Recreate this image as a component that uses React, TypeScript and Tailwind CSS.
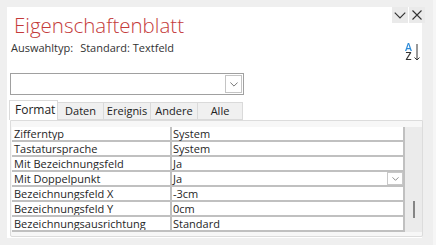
import React from 'react';

const rows = [
  { label: 'Zifferntyp', value: 'System' },
  { label: 'Tastatursprache', value: 'System' },
  { label: 'Mit Bezeichnungsfeld', value: 'Ja' },
  { label: 'Mit Doppelpunkt', value: 'Ja', combo: true },
  { label: 'Bezeichnungsfeld X', value: '-3cm' },
  { label: 'Bezeichnungsfeld Y', value: '0cm' },
  { label: 'Bezeichnungsausrichtung', value: 'Standard' },
];

const tabs = [
  { name: 'Format', w: 'w-[49px]' },
  { name: 'Daten', w: 'w-[46px]' },
  { name: 'Ereignis', w: 'w-[47px]' },
  { name: 'Andere', w: 'w-[47px]' },
  { name: 'Alle', w: 'w-[45px]' },
];

const Chevron = ({ className = '' }: { className?: string }) => (
  <svg viewBox="0 0 10 6" className={className} fill="none" stroke="currentColor" strokeWidth="1">
    <path d="M0.5 0.5 L5 5 L9.5 0.5" />
  </svg>
);

export default function App() {
  return (
    <div
      className="w-[436px] h-[245px] bg-[#efefef] pt-[7px] pl-[7px] pr-[11px] pb-[7px] text-[#262626] border-r-[3px] border-[#f6f6f6]"
      style={{ fontFamily: '"Open Sans", "Noto Sans", sans-serif' }}
    >
      <div className="relative w-full h-full bg-white flex flex-col">
        {/* window buttons */}
        <div className="absolute top-0 right-[-3px] flex h-[16px] bg-[#eaeaea]">
          <div className="w-[16px] flex items-center justify-center text-[#333]">
            <Chevron className="w-[12px] h-[7px]" />
          </div>
          <div className="w-[1px] bg-white" />
          <div className="w-[16px] flex items-center justify-center text-[#333]">
            <svg viewBox="0 0 10 10" className="w-[10px] h-[10px]" fill="none" stroke="currentColor" strokeWidth="1.1">
              <path d="M0.5 0.5 L9.5 9.5 M9.5 0.5 L0.5 9.5" />
            </svg>
          </div>
        </div>

        {/* title */}
        <div className="pl-[7px] pt-[3px] h-[31px] text-[20.5px] leading-[30px] font-light text-[#c43a3a]">
          Eigenschaftenblatt
        </div>

        {/* selection type + sort */}
        <div className="flex items-start justify-between pl-[4px] pr-[1px] h-[35px]">
          <div className="text-[11px] leading-[16px] mt-[2px] text-[#333]">
            Auswahltyp:<span className="ml-[7px]">Standard: Textfeld</span>
          </div>
          <div className="flex items-end mt-[5px] mr-[1px]">
            {/* A over Z: one text, coloured top blue / bottom dark */}
            <div className="whitespace-pre text-center text-[10.5px] leading-[9px] font-semibold bg-gradient-to-b from-[#2b8ad8] from-50% to-[#333] to-50% bg-clip-text text-transparent">
              {'A\nZ'}
            </div>
            <svg viewBox="0 0 6 17" className="w-[6px] h-[17px] ml-[2px] text-[#333]" fill="none" stroke="currentColor" strokeWidth="1">
              <path d="M3 0 L3 16 M0.5 13.5 L3 16 L5.5 13.5" />
            </svg>
          </div>
        </div>

        {/* combo box */}
        <div className="ml-[3px] w-[234px] h-[22px] border border-[#a0a0a0] flex justify-end items-center pr-[1px]">
          <div className="w-[17px] h-[18px] border border-[#c4c4c4] flex items-center justify-center text-[#555]">
            <Chevron className="w-[8px] h-[5px]" />
          </div>
        </div>

        {/* tabs */}
        <div className="flex items-end ml-[2px] mt-[5px] h-[20px]">
          {tabs.map((t, i) =>
            i === 0 ? (
              <div
                key={t.name}
                className={`${t.w} h-[20px] bg-white border border-b-0 border-[#dadada] text-[12px] leading-[18px] pl-[5px] text-[#222]`}
              >
                {t.name}
              </div>
            ) : (
              <div
                key={t.name}
                className={`${t.w} h-[18px] bg-[#f0f0f0] border border-l-0 border-[#dadada] text-[11px] leading-[16px] text-center text-[#222]`}
              >
                {t.name}
              </div>
            )
          )}
        </div>

        {/* property grid */}
        <div className="ml-[3px] mr-[-1px] flex-1 border border-[#dcdcdc] bg-[#f7f7f7] flex flex-col pt-[6px] pl-[1px] pb-[3px] mb-[1px] rounded-b-[2px]">
          <div className="flex">
            <div className="flex-1 border-r-2 border-[#c0c0c0] bg-white">
              {rows.map((r) => (
                <div key={r.label} className="flex h-[15px] border-b-2 border-[#c0c0c0] text-[11px] leading-[13px]">
                  <div className="w-[160px] pl-[2px] border-r-2 border-[#c0c0c0] truncate">{r.label}</div>
                  <div className="flex-1 flex justify-between pl-[1px]">
                    <span>{r.value}</span>
                    {r.combo && (
                      <div className="w-[16px] h-[13px] border border-[#c8c8c8] bg-white flex items-center justify-center text-[#555]">
                        <Chevron className="w-[7px] h-[4px]" />
                      </div>
                    )}
                  </div>
                </div>
              ))}
            </div>
            {/* scrollbar */}
            <div className="w-[17px] bg-[#ebebeb] flex justify-center">
              <div className="w-[2px] h-[17px] mt-[74px] bg-[#858585]" />
            </div>
          </div>
        </div>
      </div>
    </div>
  );
}
